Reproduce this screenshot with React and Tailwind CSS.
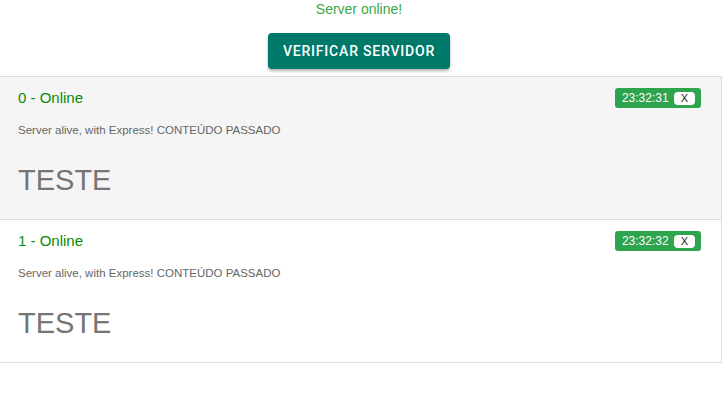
import React from "react";

const servers = [
  { id: 0, time: "23:32:31" },
  { id: 1, time: "23:32:32" },
];

function ServerItem({ server, index }) {
  return (
    <li
      className={`px-[18px] pt-[11px] pb-[20px] pr-5 ${
        index === 0 ? "bg-[#f5f5f5]" : "bg-white border-t border-[#dddddd]"
      }`}
    >
      <div className="flex h-5 items-center justify-between">
        <span className="text-[15px] text-[#0a8a0a]">{server.id} - Online</span>
        <span className="flex h-5 items-center gap-[5px] rounded-[3px] bg-[#2ea44f] pl-[7px] pr-[6px] text-[12px] text-white">
          {server.time}
          <span className="flex h-[13px] items-center rounded-[4px] bg-white px-[7px] text-[11px] leading-none text-[#222]">
            X
          </span>
        </span>
      </div>
      <p className="mt-[14px] text-[11.5px] leading-4 text-[#666]">
        Server alive, with Express! CONTEÚDO PASSADO
      </p>
      <h2 className="mt-[24px] text-[29px] leading-[37px] text-[#757575]">TESTE</h2>
    </li>
  );
}

export default function App() {
  return (
    <div className="min-h-screen bg-white font-['Liberation_Sans',Arial,sans-serif]">
      <div className="w-[718px]">
        <p className="pt-[1px] text-center text-[14px] leading-4 text-[#3aa845]">
          Server online!
        </p>
        <div className="mt-4 flex justify-center">
          <button className="h-9 w-[182px] rounded-[4px] bg-[#00796b] font-['Roboto',sans-serif] text-[14px] font-medium tracking-[0.8px] text-white shadow-[0_2px_3px_rgba(0,0,0,0.3)]">
            VERIFICAR SERVIDOR
          </button>
        </div>
      </div>
      <ul className="mt-[7px] w-[722px] border-y border-r border-[#dddddd]">
        {servers.map((s, i) => (
          <ServerItem key={s.id} server={s} index={i} />
        ))}
      </ul>
    </div>
  );
}
